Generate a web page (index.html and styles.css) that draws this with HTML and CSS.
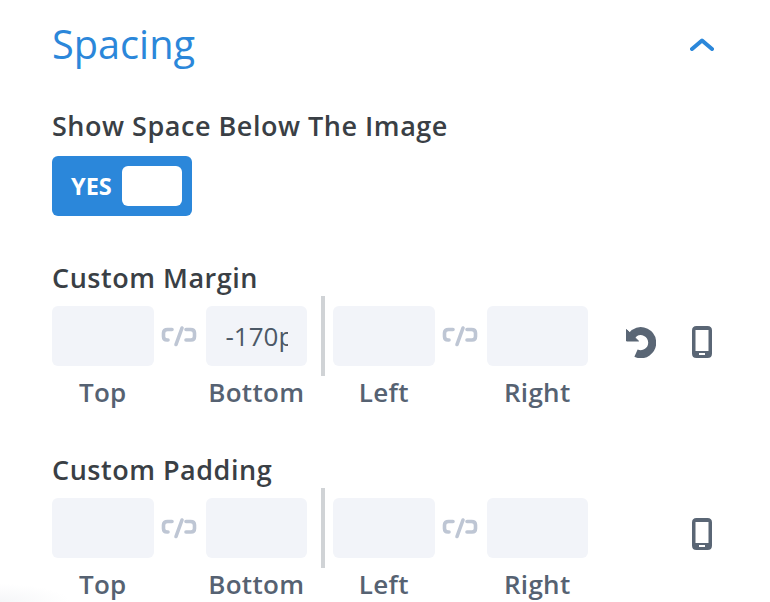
FILE: index.html
```html
<!DOCTYPE html>
<html lang="en">
<head>
<meta charset="utf-8">
<title>Spacing</title>
<link rel="stylesheet" href="styles.css">
</head>
<body>
<svg class="sprites" width="0" height="0" aria-hidden="true">
  <symbol id="link" viewBox="0 0 36 22">
    <path d="M11 4.500H6.500Q2.500 4.500 2.500 8V11.500Q2.500 15 6 15H7M15 19.500L21 3M25 4.500H29.500Q33.500 4.500 33.500 8V11.500Q33.500 15 30 15H25" fill="none" stroke="currentColor" stroke-width="3.600" stroke-linecap="round" stroke-linejoin="round"/>
  </symbol>
  <symbol id="phone" viewBox="0 0 20 32">
    <path fill-rule="evenodd" d="M4.500 0H15.500Q20 0 20 4.500V27.500Q20 32 15.500 32H4.500Q0 32 0 27.500V4.500Q0 0 4.500 0ZM3.500 4V25H16.500V4ZM7 27V29H13V27Z" fill="currentColor"/>
  </symbol>
</svg>
<main class="panel">
  <header class="head">
    <h1 class="title">Spacing</h1>
    <svg class="chevron" viewBox="0 0 24 13" aria-hidden="true"><path d="M2 11L12 2.500L22 11" fill="none" stroke="currentColor" stroke-width="4" stroke-linecap="round" stroke-linejoin="round"/></svg>
  </header>
  <section class="toggle-group">
    <h2 class="label">Show Space Below The Image</h2>
    <div class="toggle"><span class="toggle-text">YES</span><span class="knob"></span></div>
  </section>
  <section class="spacing spacing-margin">
    <h2 class="label">Custom Margin</h2>
    <div class="row">
      <div class="pair">
        <div class="cell"><div class="box"></div><span class="cap">Top</span></div>
        <svg class="link"><use href="#link"/></svg>
        <div class="cell"><div class="box box-value"><span class="value">-170p</span></div><span class="cap">Bottom</span></div>
      </div>
      <div class="divider"></div>
      <div class="pair">
        <div class="cell"><div class="box"></div><span class="cap">Left</span></div>
        <svg class="link"><use href="#link"/></svg>
        <div class="cell"><div class="box"></div><span class="cap">Right</span></div>
      </div>
      <div class="actions">
        <svg class="undo" viewBox="0 0 30 32" aria-hidden="true">
          <path d="M5.500 10L8.500 7A11.500 11.500 0 1 1 10 27.200" fill="none" stroke="currentColor" stroke-width="8"/>
          <path d="M0.500 3.500V15H12.500Z" fill="currentColor" stroke="currentColor" stroke-width="1" stroke-linejoin="round"/>
        </svg>
        <svg class="phone"><use href="#phone"/></svg>
      </div>
    </div>
  </section>
  <section class="spacing spacing-padding">
    <h2 class="label">Custom Padding</h2>
    <div class="row">
      <div class="pair">
        <div class="cell"><div class="box"></div><span class="cap">Top</span></div>
        <svg class="link"><use href="#link"/></svg>
        <div class="cell"><div class="box"></div><span class="cap">Bottom</span></div>
      </div>
      <div class="divider"></div>
      <div class="pair">
        <div class="cell"><div class="box"></div><span class="cap">Left</span></div>
        <svg class="link"><use href="#link"/></svg>
        <div class="cell"><div class="box"></div><span class="cap">Right</span></div>
      </div>
      <div class="actions actions-end">
        <svg class="phone"><use href="#phone"/></svg>
      </div>
    </div>
  </section>
</main>
</body>
</html>
```
FILE: styles.css
```css
* { box-sizing: border-box; }
html, body { margin: 0; height: 100%; }
body {
  background: radial-gradient(ellipse 70px 18px at 0 100%, #f5f6f8, #fff);
  font-family: "Open Sans", sans-serif;
  color: #32373c;
  overflow: hidden;
}
.sprites { display: block; height: 0; }
.panel { padding: 0 56px 0 52px; }
.head {
  display: flex;
  justify-content: space-between;
  align-items: center;
  height: 88px;
}
.title {
  margin: 0;
  font-size: 39.700px;
  line-height: 88px;
  font-weight: 400;
  color: #2b87da;
}
.chevron { width: 24px; height: 13px; color: #2b87da; }
.label {
  margin: 0;
  font-size: 27px;
  line-height: 32px;
  font-weight: 600;
  letter-spacing: 0.520px;
  color: #3a3f45;
}
.toggle-group { padding-top: 22px; }
.toggle {
  display: flex;
  align-items: center;
  justify-content: space-between;
  width: 140px;
  height: 60px;
  margin-top: 14px;
  padding: 0 10px 0 19px;
  background: #2b87da;
  border-radius: 6px;
}
.toggle-text { font-size: 23.500px; font-weight: 700; color: #fff; }
.knob { width: 60px; height: 40px; background: #fff; border-radius: 6px; }
.spacing-margin { padding-top: 46px; }
.spacing-padding { padding-top: 46px; }
.row { display: flex; align-items: flex-start; }
.pair { display: flex; align-items: flex-start; }
.cell { display: flex; flex-direction: column; align-items: center; width: 101.500px; }
.box {
  width: 100%;
  height: 60px;
  margin-top: 12px;
  background: #f2f4f9;
  border-radius: 6px;
}
.box-value { display: flex; align-items: center; padding-left: 20px; overflow: hidden; }
.value {
  display: block;
  width: 62px;
  overflow: hidden;
  white-space: nowrap;
  font-size: 26px;
  font-weight: 400;
  color: #4c5866;
}
.cap {
  margin-top: 10px;
  font-size: 26px;
  line-height: 32px;
  font-weight: 600;
  letter-spacing: 0.300px;
  color: #566272;
}
.link { width: 36px; height: 22px; margin: 31px 8.500px 0 7.500px; color: #bec6d4; flex: none; }
.divider { width: 4px; height: 80px; margin: 2px 8px 0 14px; background: #d0d3d6; flex: none; }
.actions { display: flex; align-items: center; gap: 36px; margin: 32px 0 0 38px; color: #5a6675; }
.actions-end { margin-left: 104px; }
.undo { width: 30px; height: 32px; flex: none; }
.phone { width: 20px; height: 32px; flex: none; }
```
